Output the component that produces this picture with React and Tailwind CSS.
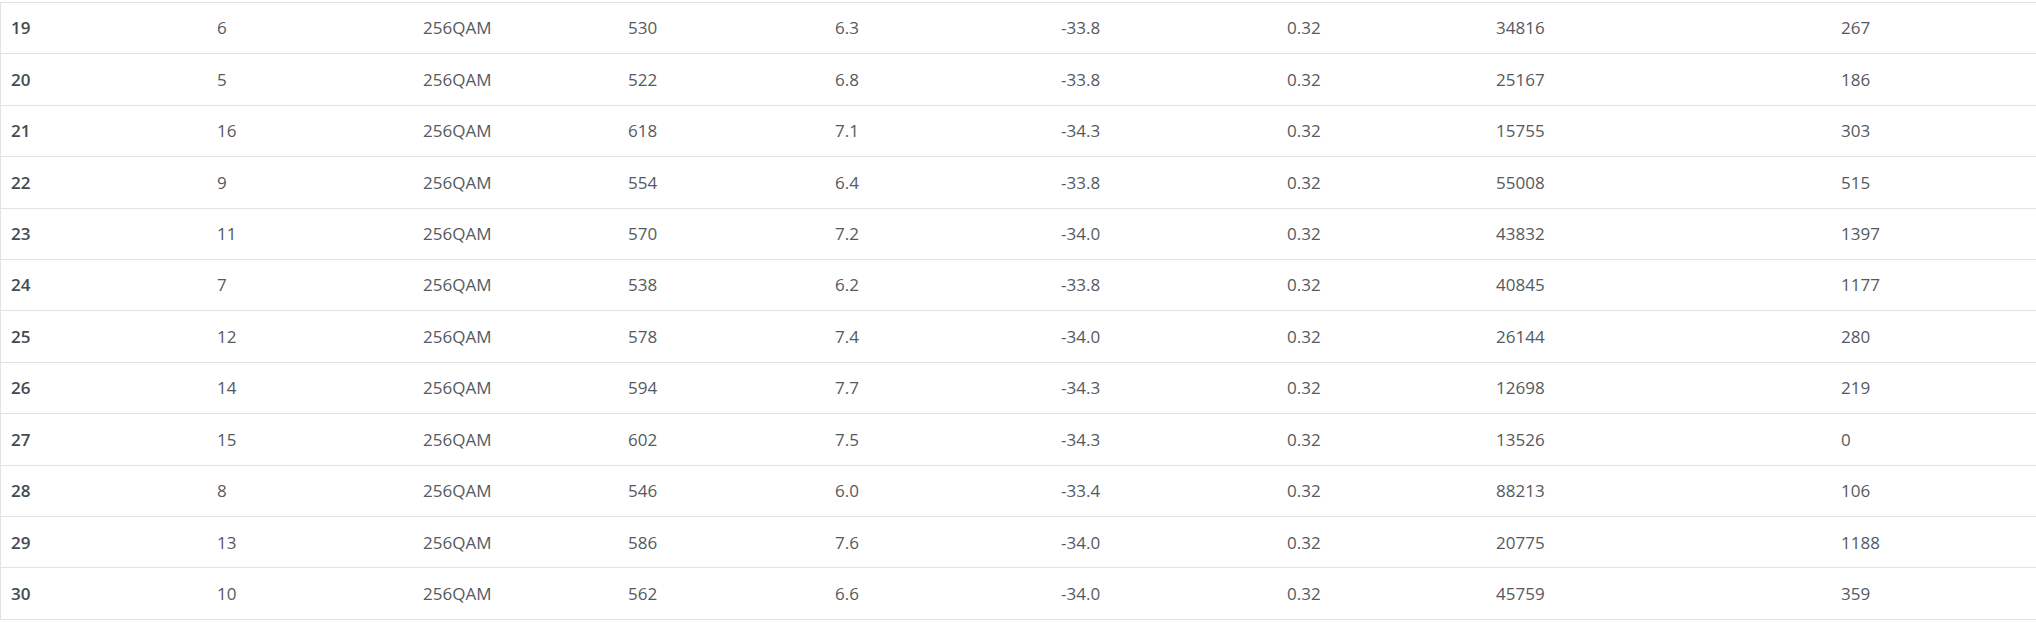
const ROWS = [
  ["19", "6", "256QAM", "530", "6.3", "-33.8", "0.32", "34816", "267"],
  ["20", "5", "256QAM", "522", "6.8", "-33.8", "0.32", "25167", "186"],
  ["21", "16", "256QAM", "618", "7.1", "-34.3", "0.32", "15755", "303"],
  ["22", "9", "256QAM", "554", "6.4", "-33.8", "0.32", "55008", "515"],
  ["23", "11", "256QAM", "570", "7.2", "-34.0", "0.32", "43832", "1397"],
  ["24", "7", "256QAM", "538", "6.2", "-33.8", "0.32", "40845", "1177"],
  ["25", "12", "256QAM", "578", "7.4", "-34.0", "0.32", "26144", "280"],
  ["26", "14", "256QAM", "594", "7.7", "-34.3", "0.32", "12698", "219"],
  ["27", "15", "256QAM", "602", "7.5", "-34.3", "0.32", "13526", "0"],
  ["28", "8", "256QAM", "546", "6.0", "-33.4", "0.32", "88213", "106"],
  ["29", "13", "256QAM", "586", "7.6", "-34.0", "0.32", "20775", "1188"],
  ["30", "10", "256QAM", "562", "6.6", "-34.0", "0.32", "45759", "359"],
];

export default function App() {
  return (
    <div
      className="w-[2036px] h-[623px] bg-white pt-[2px] overflow-hidden"
      style={{ fontFamily: '"Open Sans", "Noto Sans", sans-serif' }}
    >
      <div className="border-t border-l border-[#e2e2e2]">
        {ROWS.map((row, i) => (
          <div
            key={i}
            className="grid grid-cols-[206px_206px_205px_207px_226px_226px_209px_345px_206px] h-[51.42px] items-center border-b border-[#e2e2e2] text-[17px] text-[#555a60]"
          >
            {row.map((cell, j) => (
              <div
                key={j}
                className={j === 0 ? "pl-[10px] font-semibold text-[#454a50]" : "pl-[10px]"}
              >
                {cell}
              </div>
            ))}
          </div>
        ))}
      </div>
    </div>
  );
}
